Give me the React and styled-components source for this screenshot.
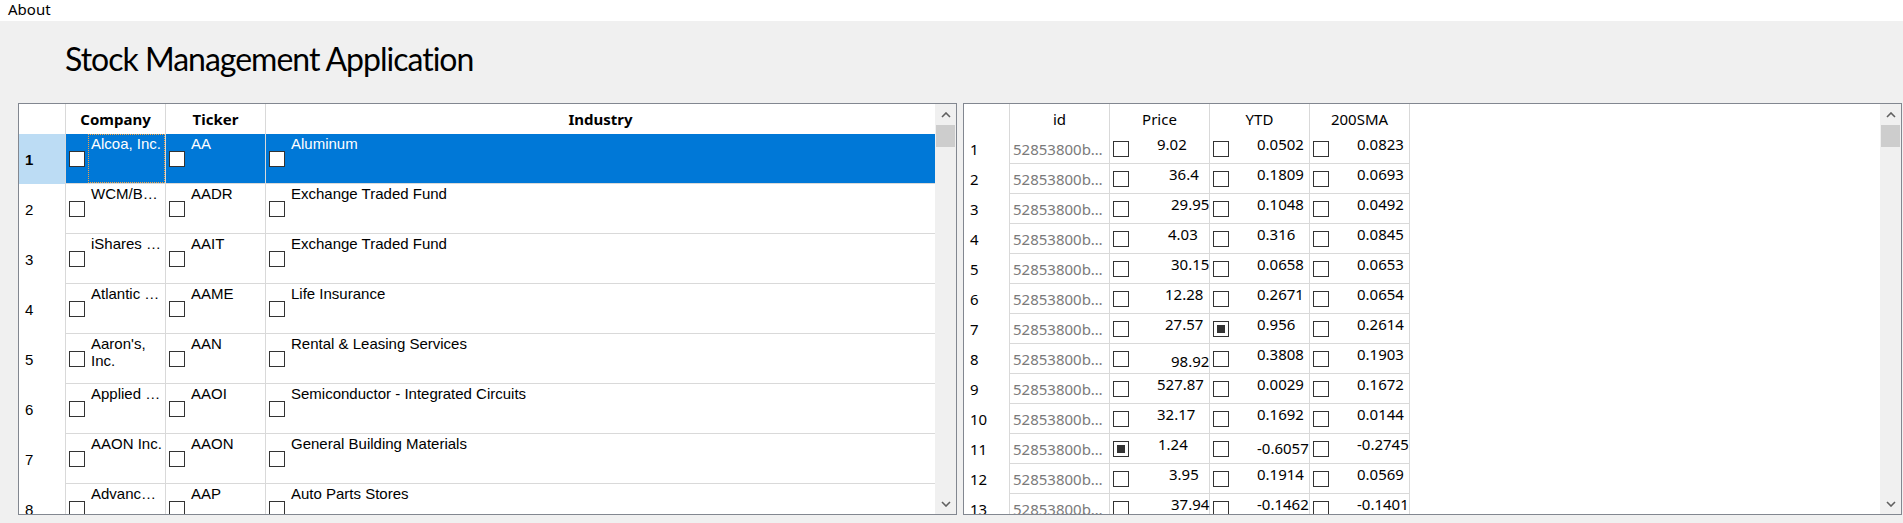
import React from 'react';
import styled, { createGlobalStyle } from 'styled-components';

const GlobalStyle = createGlobalStyle`
  html, body {
    margin: 0;
    padding: 0;
    background: #f0f0f0;
  }
  body {
    font-family: "Noto Sans", "Liberation Sans", sans-serif;
    color: #000;
  }
`;

const companies = [
    { name: 'Alcoa, Inc.', ticker: 'AA', industry: 'Aluminum', selected: true },
    { name: 'WCM/B…', ticker: 'AADR', industry: 'Exchange Traded Fund' },
    { name: 'iShares …', ticker: 'AAIT', industry: 'Exchange Traded Fund' },
    { name: 'Atlantic …', ticker: 'AAME', industry: 'Life Insurance' },
    { name: "Aaron's, Inc.", ticker: 'AAN', industry: 'Rental & Leasing Services' },
    { name: 'Applied …', ticker: 'AAOI', industry: 'Semiconductor - Integrated Circuits' },
    { name: 'AAON Inc.', ticker: 'AAON', industry: 'General Building Materials' },
    { name: 'Advanc…', ticker: 'AAP', industry: 'Auto Parts Stores' },
];

// x = where the number starts inside its column, dy = extra drop, on = box ticked
const stocks = [
    { price: { v: '9.02', x: 47 }, ytd: { v: '0.0502' }, sma: { v: '0.0823' } },
    { price: { v: '36.4', x: 59 }, ytd: { v: '0.1809' }, sma: { v: '0.0693' } },
    { price: { v: '29.95', x: 61 }, ytd: { v: '0.1048' }, sma: { v: '0.0492' } },
    { price: { v: '4.03', x: 58 }, ytd: { v: '0.316' }, sma: { v: '0.0845' } },
    { price: { v: '30.15', x: 61 }, ytd: { v: '0.0658' }, sma: { v: '0.0653' } },
    { price: { v: '12.28', x: 55 }, ytd: { v: '0.2671' }, sma: { v: '0.0654' } },
    { price: { v: '27.57', x: 55 }, ytd: { v: '0.956', on: true }, sma: { v: '0.2614' } },
    { price: { v: '98.92', x: 61, dy: 7 }, ytd: { v: '0.3808' }, sma: { v: '0.1903' } },
    { price: { v: '527.87', x: 47 }, ytd: { v: '0.0029' }, sma: { v: '0.1672' } },
    { price: { v: '32.17', x: 47 }, ytd: { v: '0.1692' }, sma: { v: '0.0144' } },
    { price: { v: '1.24', x: 48, on: true }, ytd: { v: '-0.6057', dy: 4 }, sma: { v: '-0.2745' } },
    { price: { v: '3.95', x: 59 }, ytd: { v: '0.1914' }, sma: { v: '0.0569' } },
    { price: { v: '37.94', x: 61 }, ytd: { v: '-0.1462' }, sma: { v: '-0.1401' } },
];

const Window = styled.div`
display: flex;
flex-direction: column;
width: 1903px;
height: 523px;
overflow: hidden;
background: #f0f0f0;
`;

const MenuBar = styled.div`
height: 21px;
flex: none;
background: #fff;
padding-left: 8px;
font-size: 15px;
line-height: 18px;
box-sizing: border-box;
`;

const Title = styled.h1`
margin: 0;
height: 82px;
flex: none;
box-sizing: border-box;
padding: 22px 0 0 65px;
font-family: Lato, "Noto Sans", sans-serif;
font-size: 32px;
line-height: 32px;
font-weight: normal;
letter-spacing: -1px;
`;

const Panels = styled.div`
display: flex;
gap: 6px;
height: 412px;
padding: 0 1px 0 18px;
flex: none;
`;

const Grid = styled.div`
flex: 1;
display: flex;
border: 1px solid #828790;
background: #fff;
overflow: hidden;
`;

const GridBody = styled.div`
flex: 1;
display: flex;
flex-direction: column;
overflow: hidden;
`;

const HeaderRow = styled.div`
display: flex;
height: 30px;
flex: none;
`;

const Row = styled.div`
display: flex;
height: ${p => p.$h}px;
flex: none;
`;

const Corner = styled.div`
width: ${p => p.$w}px;
flex: none;
box-sizing: border-box;
border-right: 1px solid #d9d9d9;
`;

const HeadCell = styled.div`
width: ${p => p.$w ? `${p.$w}px` : 'auto'};
flex: ${p => p.$w ? 'none' : '1'};
box-sizing: border-box;
border-right: ${p => p.$w ? '1px solid #d9d9d9' : 'none'};
display: flex;
align-items: center;
justify-content: center;
font-size: 15px;
font-weight: ${p => p.$bold ? 700 : 400};
`;

const RowHeader = styled.div`
width: ${p => p.$w}px;
flex: none;
box-sizing: border-box;
border-right: 1px solid #d9d9d9;
display: flex;
align-items: center;
padding-left: 6px;
font-family: ${p => p.$arial ? '"Liberation Sans", Arial, sans-serif' : '"Noto Sans", sans-serif'};
font-size: 15px;
font-weight: ${p => p.$selected ? 700 : 400};
background: ${p => p.$selected ? '#bcdcf4' : '#fff'};
`;

const Cell = styled.div`
width: ${p => p.$w ? `${p.$w}px` : 'auto'};
flex: ${p => p.$w ? 'none' : '1'};
min-width: 0;
box-sizing: border-box;
border-right: ${p => p.$w ? '1px solid #d9d9d9' : 'none'};
border-bottom: 1px solid #d9d9d9;
display: flex;
padding-left: 3px;
background: ${p => p.$selected ? '#0078d7' : '#fff'};
color: ${p => p.$selected ? '#fff' : '#000'};
`;

const CheckBox = styled.span`
width: 16px;
height: 16px;
flex: none;
box-sizing: border-box;
border: 1px solid #333;
background: #fff;
align-self: center;
display: flex;
align-items: center;
justify-content: center;

&::after {
  content: '';
  display: ${p => p.$checked ? 'block' : 'none'};
  width: 8px;
  height: 8px;
  background: #333;
}
`;

const CellText = styled.div`
flex: 1;
min-width: 0;
margin-left: 3px;
padding: 0 2px;
box-sizing: border-box;
border: 1px dotted ${p => p.$focused ? '#f7a440' : 'transparent'};
font-family: "Liberation Sans", Arial, sans-serif;
font-size: 15px;
line-height: 17px;
overflow: hidden;
`;

const IdText = styled.div`
align-self: center;
color: #7a7a7a;
font-size: 15px;
white-space: nowrap;
`;

const Value = styled.div`
margin-left: ${p => p.$x - 19}px;
padding-top: ${p => p.$dy}px;
font-size: 15px;
line-height: 20px;
white-space: nowrap;
`;

const Filler = styled.div`
flex: 1;
`;

const ScrollBar = styled.div`
width: 21px;
flex: none;
display: flex;
flex-direction: column;
background: #f0f0f0;
`;

const Arrow = styled.div`
height: 21px;
flex: none;
display: flex;
align-items: center;
justify-content: center;
`;

const Thumb = styled.div`
height: 22px;
flex: none;
margin: 0 1px;
background: #cdcdcd;
`;

const Track = styled.div`
flex: 1;
`;

const Chevron = ({ down }) => (
    <svg width="10" height="6" viewBox="0 0 10 6">
        <polyline
            points={down ? '1,1 5,5 9,1' : '1,5 5,1 9,5'}
            fill="none"
            stroke="#606060"
            strokeWidth="1.6"
        />
    </svg>
);

const Scroller = () => (
    <ScrollBar>
        <Arrow><Chevron /></Arrow>
        <Thumb />
        <Track />
        <Arrow><Chevron down /></Arrow>
    </ScrollBar>
);

const CompanyGrid = () => (
    <Grid>
        <GridBody>
            <HeaderRow>
                <Corner $w={47} />
                <HeadCell $w={100} $bold>Company</HeadCell>
                <HeadCell $w={100} $bold>Ticker</HeadCell>
                <HeadCell $bold>Industry</HeadCell>
            </HeaderRow>
            {companies.map((c, i) => (
                <Row key={c.ticker} $h={50}>
                    <RowHeader $w={47} $arial $selected={c.selected}>{i + 1}</RowHeader>
                    <Cell $w={100} $selected={c.selected}>
                        <CheckBox />
                        <CellText $focused={c.selected}>{c.name}</CellText>
                    </Cell>
                    <Cell $w={100} $selected={c.selected}>
                        <CheckBox />
                        <CellText>{c.ticker}</CellText>
                    </Cell>
                    <Cell $selected={c.selected}>
                        <CheckBox />
                        <CellText>{c.industry}</CellText>
                    </Cell>
                </Row>
            ))}
        </GridBody>
        <Scroller />
    </Grid>
);

const NumberCell = ({ v, x = 47, dy = 0, on = false }) => (
    <Cell $w={100}>
        <CheckBox $checked={on} />
        <Value $x={x} $dy={dy}>{v}</Value>
    </Cell>
);

const StockGrid = () => (
    <Grid>
        <GridBody>
            <HeaderRow>
                <Corner $w={46} />
                <HeadCell $w={100}>id</HeadCell>
                <HeadCell $w={100}>Price</HeadCell>
                <HeadCell $w={100}>YTD</HeadCell>
                <HeadCell $w={100}>200SMA</HeadCell>
                <Filler />
            </HeaderRow>
            {stocks.map((s, i) => (
                <Row key={i} $h={30}>
                    <RowHeader $w={46}>{i + 1}</RowHeader>
                    <Cell $w={100}>
                        <IdText>52853800b…</IdText>
                    </Cell>
                    <NumberCell {...s.price} />
                    <NumberCell {...s.ytd} />
                    <NumberCell {...s.sma} />
                    <Filler />
                </Row>
            ))}
        </GridBody>
        <Scroller />
    </Grid>
);

const App = () => (
    <Window>
        <GlobalStyle />
        <MenuBar>About</MenuBar>
        <Title>Stock Management Application</Title>
        <Panels>
            <CompanyGrid />
            <StockGrid />
        </Panels>
    </Window>
);

export default App;
